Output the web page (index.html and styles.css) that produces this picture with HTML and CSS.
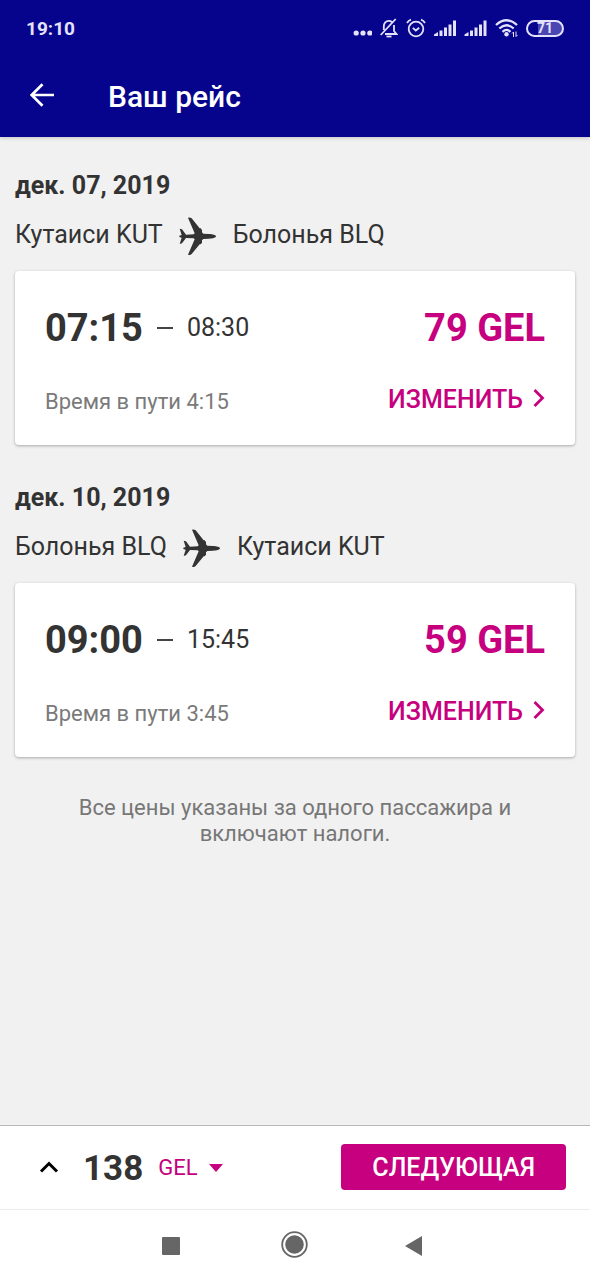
FILE: index.html
```html
<!DOCTYPE html>
<html lang="ru">
<head>
<meta charset="utf-8">
<meta name="viewport" content="width=device-width, initial-scale=1">
<title>Ваш рейс</title>
<link rel="stylesheet" href="styles.css">
</head>
<body>
<svg class="defs" aria-hidden="true">
  <symbol id="plane" viewBox="26 18 120 120">
    <path d="M140 79C140 75 130 72 119 72L102 71L98 67L98 60L94 55L91 55L67 25Q62 21 56 23L76 70L73 73L50 74L38 58L31 56L37 75L30 77V81L37 83L31 102L38 100L50 84L73 85L76 88L56 134Q62 137 67 132L91 103L94 103L98 98L98 91L102 87L119 86C130 86 140 83 140 79Z" fill="currentColor"/>
  </symbol>
  <symbol id="chevron" viewBox="0 0 12 20">
    <path d="M1.5 1L9.500 9L1.500 17" fill="none" stroke="currentColor" stroke-width="2.800"/>
  </symbol>
  <symbol id="signal" viewBox="0 0 22 18">
    <path d="M0 17V15.500L4 13V17ZM5.500 11.500H8.500V17H5.500ZM10 8.500H13V17H10ZM14.500 5.500H17.500V17H14.500ZM19 1.500H22V17H19Z" fill="currentColor"/>
  </symbol>
</svg>
<div class="screen">
  <header class="header">
    <div class="status">
      <span class="clock">19:10</span>
      <div class="status-icons">
        <svg width="19" height="20" viewBox="0 0 19 20"><g fill="currentColor"><circle cx="3.200" cy="15" r="2.600"/><circle cx="10" cy="15" r="2.600"/><circle cx="16.800" cy="15" r="2.600"/></g></svg>
        <svg width="18" height="20" viewBox="0 0 18 20"><g fill="none" stroke="currentColor" stroke-width="1.800"><path d="M3.800 12V8.500C3.800 5 6 2.800 8.800 2.800C10 2.800 11 3.200 12 4M14 7V13L16.500 16H5M.7 17L15.700 1"/><path d="M6.500 18.500H11.500"/></g></svg>
        <svg width="20" height="20" viewBox="0 0 20 20"><g fill="none" stroke="currentColor" stroke-width="1.800"><circle cx="10" cy="11" r="7.300"/><path d="M1 5Q2.500 2.500 5 1.700M19 5Q17.500 2.500 15 1.700M6.800 9.800L9.800 12.500L13.200 9.800"/></g></svg>
        <svg width="22" height="18"><use href="#signal"/></svg>
        <svg width="23" height="18"><use href="#signal"/></svg>
        <svg width="23" height="20" viewBox="0 0 23 20"><g fill="none" stroke="currentColor" stroke-width="2.300"><path d="M1 7Q11.500-2.500 22 7M4.300 10.500Q11.500 4 18.700 10.500M7.500 13.800Q11.500 10 15.500 13.800"/></g><circle cx="11.500" cy="16.300" r="2.200" fill="currentColor"/><path d="M18.500 19V14L17 15.500M21 13.500V18.500L22.500 17" fill="none" stroke="currentColor"/></svg>
        <span class="battery">71</span>
      </div>
    </div>
    <div class="appbar">
      <button class="back" type="button" aria-label="Назад"><svg width="24" height="24" viewBox="0 0 24 24"><path d="M24 12H2M12.500 1.200L1.700 12L12.500 22.800" fill="none" stroke="currentColor" stroke-width="2.700"/></svg></button>
      <h1 class="title">Ваш рейс</h1>
    </div>
  </header>
  <main class="content">
    <section>
      <h2 class="date">дек. 07, 2019</h2>
      <div class="route"><span>Кутаиси KUT</span><svg class="plane"><use href="#plane"/></svg><span>Болонья BLQ</span></div>
      <article class="card">
        <div class="card-row">
          <div class="times"><strong class="depart">07:15</strong><span class="dash"></span><span class="arrive">08:30</span></div>
          <strong class="price">79 GEL</strong>
        </div>
        <div class="card-row card-foot">
          <span class="duration">Время в пути 4:15</span>
          <button class="change" type="button">ИЗМЕНИТЬ<svg width="12" height="20"><use href="#chevron"/></svg></button>
        </div>
      </article>
    </section>
    <section>
      <h2 class="date">дек. 10, 2019</h2>
      <div class="route"><span>Болонья BLQ</span><svg class="plane"><use href="#plane"/></svg><span>Кутаиси KUT</span></div>
      <article class="card">
        <div class="card-row">
          <div class="times"><strong class="depart">09:00</strong><span class="dash"></span><span class="arrive">15:45</span></div>
          <strong class="price">59 GEL</strong>
        </div>
        <div class="card-row card-foot">
          <span class="duration">Время в пути 3:45</span>
          <button class="change" type="button">ИЗМЕНИТЬ<svg width="12" height="20"><use href="#chevron"/></svg></button>
        </div>
      </article>
    </section>
    <p class="note">Все цены указаны за одного пассажира и включают налоги.</p>
  </main>
  <footer>
    <div class="total-bar">
      <button class="expand" type="button" aria-label="Подробнее"><svg width="20" height="14" viewBox="0 0 20 14"><path d="M2 11.500L10 3.500L18 11.500" fill="none" stroke="currentColor" stroke-width="3"/></svg></button>
      <strong class="total">138</strong>
      <button class="currency" type="button">GEL<svg width="14" height="8" viewBox="0 0 14 8"><path d="M0 0H14L7 8Z" fill="currentColor"/></svg></button>
      <button class="next" type="button">СЛЕДУЮЩАЯ</button>
    </div>
    <nav class="system-nav">
      <button type="button" aria-label="Недавние"><svg width="28" height="28" viewBox="0 0 28 28"><rect x="3" y="6" width="18" height="18" rx="1" fill="currentColor"/></svg></button>
      <button type="button" aria-label="Домой"><svg width="28" height="28" viewBox="0 0 28 28"><circle cx="13.500" cy="13.500" r="12.300" fill="none" stroke="currentColor" stroke-width="1.800"/><circle cx="13.500" cy="13.500" r="9.300" fill="currentColor"/></svg></button>
      <button type="button" aria-label="Назад"><svg width="28" height="28" viewBox="0 0 28 28"><path d="M19 5V25L2 15Z" fill="currentColor"/></svg></button>
    </nav>
  </footer>
</div>
</body>
</html>
```
FILE: styles.css
```css
* {
  box-sizing: border-box;
}

body {
  margin: 0;
  background: #f1f1f1;
  color: #333;
  font-family: Roboto, "Noto Sans", sans-serif;
}

h1, h2, p {
  margin: 0;
}

button {
  padding: 0;
  border: 0;
  background: none;
  color: inherit;
  font: inherit;
}

svg {
  display: block;
  flex: none;
}

.defs {
  position: absolute;
  width: 0;
  height: 0;
}

.screen {
  display: flex;
  flex-direction: column;
  min-height: 100vh;
}

.header {
  background: #06038d;
  color: #fff;
  box-shadow: 0 1px 4px rgba(0, 0, 0, 0.2);
}

.status {
  display: flex;
  align-items: center;
  justify-content: space-between;
  height: 56px;
  padding: 0 26px;
  color: #e4e2fb;
}

.clock {
  font-size: 19px;
  font-weight: 700;
}

.status-icons {
  display: flex;
  align-items: center;
  gap: 8px;
}

.battery {
  width: 38px;
  height: 17px;
  border: 2px solid currentColor;
  border-radius: 9px;
  background: linear-gradient(90deg, #06038d 30%, #4a46b4 30%);
  font-size: 14px;
  font-weight: 700;
  line-height: 13px;
  text-align: center;
}

.appbar {
  display: flex;
  align-items: center;
  gap: 54px;
  height: 81px;
  padding: 0 30px;
}

.back {
  padding-bottom: 4px;
}

.title {
  font-size: 30px;
  font-weight: 500;
  line-height: 36px;
}

.content {
  display: flex;
  flex: 1;
  flex-direction: column;
  gap: 38px;
  padding: 34px 15px 37px;
}

.date {
  margin-bottom: 15px;
  font-size: 25px;
  font-weight: 700;
  line-height: 30px;
}

.route {
  display: flex;
  gap: 15px;
  margin-bottom: 15px;
  font-size: 25px;
  line-height: 37px;
}

.plane {
  width: 40px;
  height: 40px;
}

.card {
  padding: 35px 30px 25px;
  border-radius: 4px;
  background: #fff;
  box-shadow: 0 1px 3px rgba(0, 0, 0, 0.3);
}

.card-row {
  display: flex;
  justify-content: space-between;
}

.card-foot {
  margin-top: 34px;
}

.times {
  display: flex;
  align-items: center;
}

.depart,
.price {
  font-size: 38px;
  font-weight: 700;
  line-height: 44px;
}

.price,
.change,
.currency {
  color: #c6007e;
}

.dash {
  width: 16px;
  height: 2px;
  margin: 0 14px;
  background: #444;
}

.arrive {
  font-size: 25px;
  line-height: 42px;
}

.duration {
  color: #7a7a7a;
  font-size: 22px;
  line-height: 36px;
}

.change {
  display: flex;
  align-items: center;
  gap: 10px;
  height: 30px;
  font-size: 25px;
  font-weight: 500;
}

.note {
  padding: 0 60px;
  color: #777;
  font-size: 22px;
  line-height: 26px;
  text-align: center;
}

.total-bar {
  display: flex;
  align-items: center;
  height: 84px;
  padding: 0 24px 2px 39px;
  border-top: 1px solid #b8b8b8;
  background: #fff;
}

.expand {
  margin-right: 24px;
  color: #000;
}

.total {
  padding-top: 4px;
  font-size: 35px;
  font-weight: 700;
  line-height: 44px;
}

.currency {
  display: flex;
  align-items: center;
  gap: 11px;
  margin-left: 15px;
  padding-top: 2px;
  font-size: 22px;
}

.next {
  height: 46px;
  margin-left: auto;
  padding: 2px 31px 0;
  border-radius: 4px;
  background: #c6007e;
  color: #fff;
  font-size: 25px;
  font-weight: 500;
}

.system-nav {
  display: flex;
  align-items: center;
  justify-content: center;
  gap: 94px;
  height: 71px;
  border-top: 1px solid #ececec;
  background: #fff;
  color: #666;
}
```
